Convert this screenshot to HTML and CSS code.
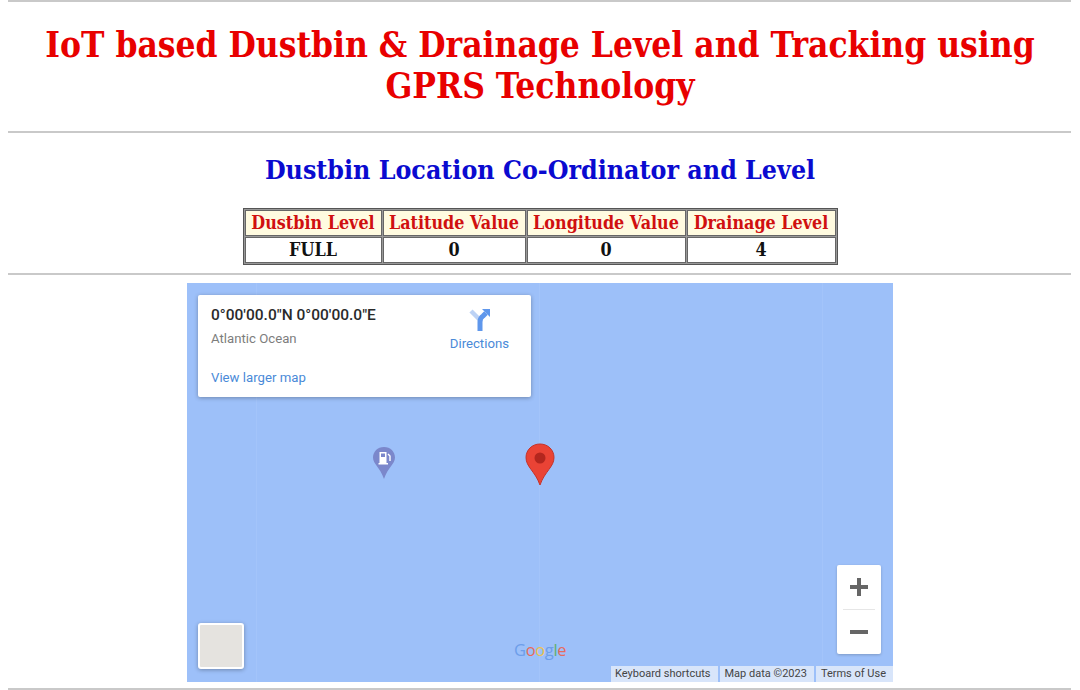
FILE: index.html
```html
<!DOCTYPE html>
<html lang="en">
<head>
<meta charset="utf-8">
<title>Dustbin</title>
<link rel="stylesheet" href="styles.css">
</head>
<body>
<hr class="rule rule-top">
<h1 class="title">IoT based Dustbin &amp; Drainage Level and Tracking using GPRS Technology</h1>
<hr class="rule rule-mid">
<h2 class="subtitle">Dustbin Location Co-Ordinator and Level</h2>
<table class="levels">
  <tr><th class="c1">Dustbin Level</th><th class="c2">Latitude Value</th><th class="c3">Longitude Value</th><th class="c4">Drainage Level</th></tr>
  <tr><td>FULL</td><td>0</td><td>0</td><td>4</td></tr>
</table>
<hr class="rule rule-low">
<div class="map">
  <div class="seam seam-a"></div>
  <div class="seam seam-b"></div>
  <div class="seam seam-c"></div>
  <div class="card">
    <div class="card-main">
      <div class="coords">0°00'00.0"N 0°00'00.0"E</div>
      <div class="place">Atlantic Ocean</div>
      <a class="larger">View larger map</a>
    </div>
    <div class="directions">
      <svg class="dir-icon" width="22" height="24" viewBox="0 0 22 24">
        <path d="M2 3 L10 11" stroke="#bcd2f5" stroke-width="4.5" fill="none"/>
        <path d="M11 23 V14 Q11 10 14 8 L17 5" stroke="#5f97ec" stroke-width="5" fill="none"/>
        <path d="M13 1 H21 V9 Z" fill="#5f97ec"/>
      </svg>
      <span>Directions</span>
    </div>
  </div>
  <svg class="pin-fuel" width="24" height="34" viewBox="0 0 24 34">
    <path d="M12 1 C5.5 1 1 5.8 1 11.5 C1 18 8 21 12 33 C16 21 23 18 23 11.5 C23 5.8 18.5 1 12 1 Z" fill="#7b87cb"/>
    <path d="M7.5 17 V6 H14.5 V17 H16 V18.5 H6.5 V17 Z" fill="#fff"/>
    <rect x="9" y="7.5" width="4" height="3.5" fill="#7b87cb"/>
    <path d="M16 8 L18 10 V15" stroke="#fff" stroke-width="1.4" fill="none"/>
  </svg>
  <svg class="pin-red" width="30" height="43" viewBox="0 0 30 43">
    <path d="M15 1 C7 1 1 7 1 14.5 C1 24 10 28 15 42 C20 28 29 24 29 14.5 C29 7 23 1 15 1 Z" fill="#ea4335" stroke="#c5332a" stroke-width="1"/>
    <circle cx="15" cy="15" r="5.5" fill="#b3261e"/>
  </svg>
  <div class="zoom">
    <svg class="zoom-btn" width="44" height="44" viewBox="0 0 44 44"><path d="M22 13 V31 M13 22 H31" stroke="#666" stroke-width="4"/></svg>
    <div class="zoom-sep"></div>
    <svg class="zoom-btn" width="44" height="44" viewBox="0 0 44 44"><path d="M13 22 H31" stroke="#666" stroke-width="4"/></svg>
  </div>
  <div class="thumb"></div>
  <div class="google"><span class="g-b">G</span><span class="g-r">o</span><span class="g-y">o</span><span class="g-b">g</span><span class="g-g">l</span><span class="g-r">e</span></div>
  <div class="attrib">
    <span>Keyboard shortcuts</span><span>Map data ©2023</span><span>Terms of Use</span>
  </div>
</div>
<hr class="rule rule-end">
</body>
</html>
```
FILE: styles.css
```css
html, body { margin: 0; padding: 0; background: #fff; }
body { width: 1080px; height: 690px; overflow: hidden; font-family: "DejaVu Serif Condensed", "DejaVu Serif", serif; display: flex; flex-direction: column; align-items: center; }
.rule { border: 0; height: 2px; background: #c9c9c9; width: 1063px; margin: 0 0 0 8px; flex: none; align-self: flex-start; }
.title { margin: 22px 0 1px; width: 1040px; text-align: center; color: #e80000; font-size: 35px; line-height: 41px; font-weight: 700; }
.rule-mid { margin-top: 24px; }
.subtitle { margin: 21px 0 0; color: #0a0ad0; font-size: 26.5px; line-height: 32px; font-weight: 700; }
.levels { margin-top: 22px; border-collapse: separate; border-spacing: 1px; border: 1px solid #555; background: #999; font-size: 17.8px; line-height: 22px; }
.levels th, .levels td { border: 1px solid #666; padding: 0; text-align: center; height: 24px; white-space: nowrap; }
.levels th { background: #fffbe0; color: #d01010; font-weight: 700; }
.levels td { color: #111; font-weight: 700; background: #fff; }
.c1 { width: 135px; } .c2 { width: 141px; } .c3 { width: 157px; } .c4 { width: 147px; }
.rule-low { margin-top: 8px; }
.map { position: relative; width: 706px; height: 399px; margin-top: 8px; background: #9dc0f9; flex: none; overflow: hidden; font-family: Roboto, sans-serif; }
.rule-end { margin-top: 6px; }
.seam { position: absolute; top: 0; bottom: 0; width: 1px; background: #a3c4fa; }
.seam-a { left: 69px; } .seam-b { left: 352px; } .seam-c { left: 635px; }
.card { position: absolute; left: 11px; top: 12px; width: 333px; height: 102px; background: #fff; border-radius: 2px; box-shadow: 0 1px 4px rgba(0,0,0,.3); display: flex; justify-content: space-between; box-sizing: border-box; padding: 11px 22px 0 13px; }
.card-main { display: flex; flex-direction: column; }
.coords { font-size: 15.5px; line-height: 18px; font-weight: 500; color: #2a2a2a; }
.place { font-size: 13.2px; line-height: 16px; color: #7d7d7d; margin-top: 7px; }
.larger { font-size: 13.2px; line-height: 16px; color: #4a8ad8; margin-top: 23px; }
.directions { display: flex; flex-direction: column; align-items: center; color: #4a8ad8; font-size: 13.2px; line-height: 16px; }
.dir-icon { margin: 2px 0 4px 2px; }
.pin-fuel { position: absolute; left: 185px; top: 163px; }
.pin-red { position: absolute; left: 338px; top: 160px; }
.zoom { position: absolute; left: 650px; top: 282px; width: 44px; background: #fff; border-radius: 2px; box-shadow: 0 1px 3px rgba(0,0,0,.2); display: flex; flex-direction: column; height: 89px; }
.zoom-btn { display: block; flex: none; }
.zoom-sep { width: 32px; height: 1px; background: #e6e6e6; margin: 0 6px; flex: none; }
.thumb { position: absolute; left: 11px; top: 340px; width: 42px; height: 42px; background: #e5e3df; border: 2px solid #fff; border-radius: 3px; box-shadow: 0 1px 4px rgba(0,0,0,.3); }
.google { position: absolute; left: 327px; top: 355px; font-size: 16.5px; line-height: 24px; letter-spacing: -0.35px; font-weight: 500; font-family: "Open Sans", sans-serif; }
.g-b { color: #6d9eea; } .g-r { color: #e56b5e; } .g-y { color: #edc24c; } .g-g { color: #5fb070; }
.attrib { position: absolute; right: 0; bottom: 0; height: 16px; display: flex; gap: 2px; font-size: 11px; line-height: 16px; color: #444; }
.attrib span { background: #d8e5fa; padding: 0 7px 0 5px; }
.attrib span:first-child { padding-left: 4px; }
```
